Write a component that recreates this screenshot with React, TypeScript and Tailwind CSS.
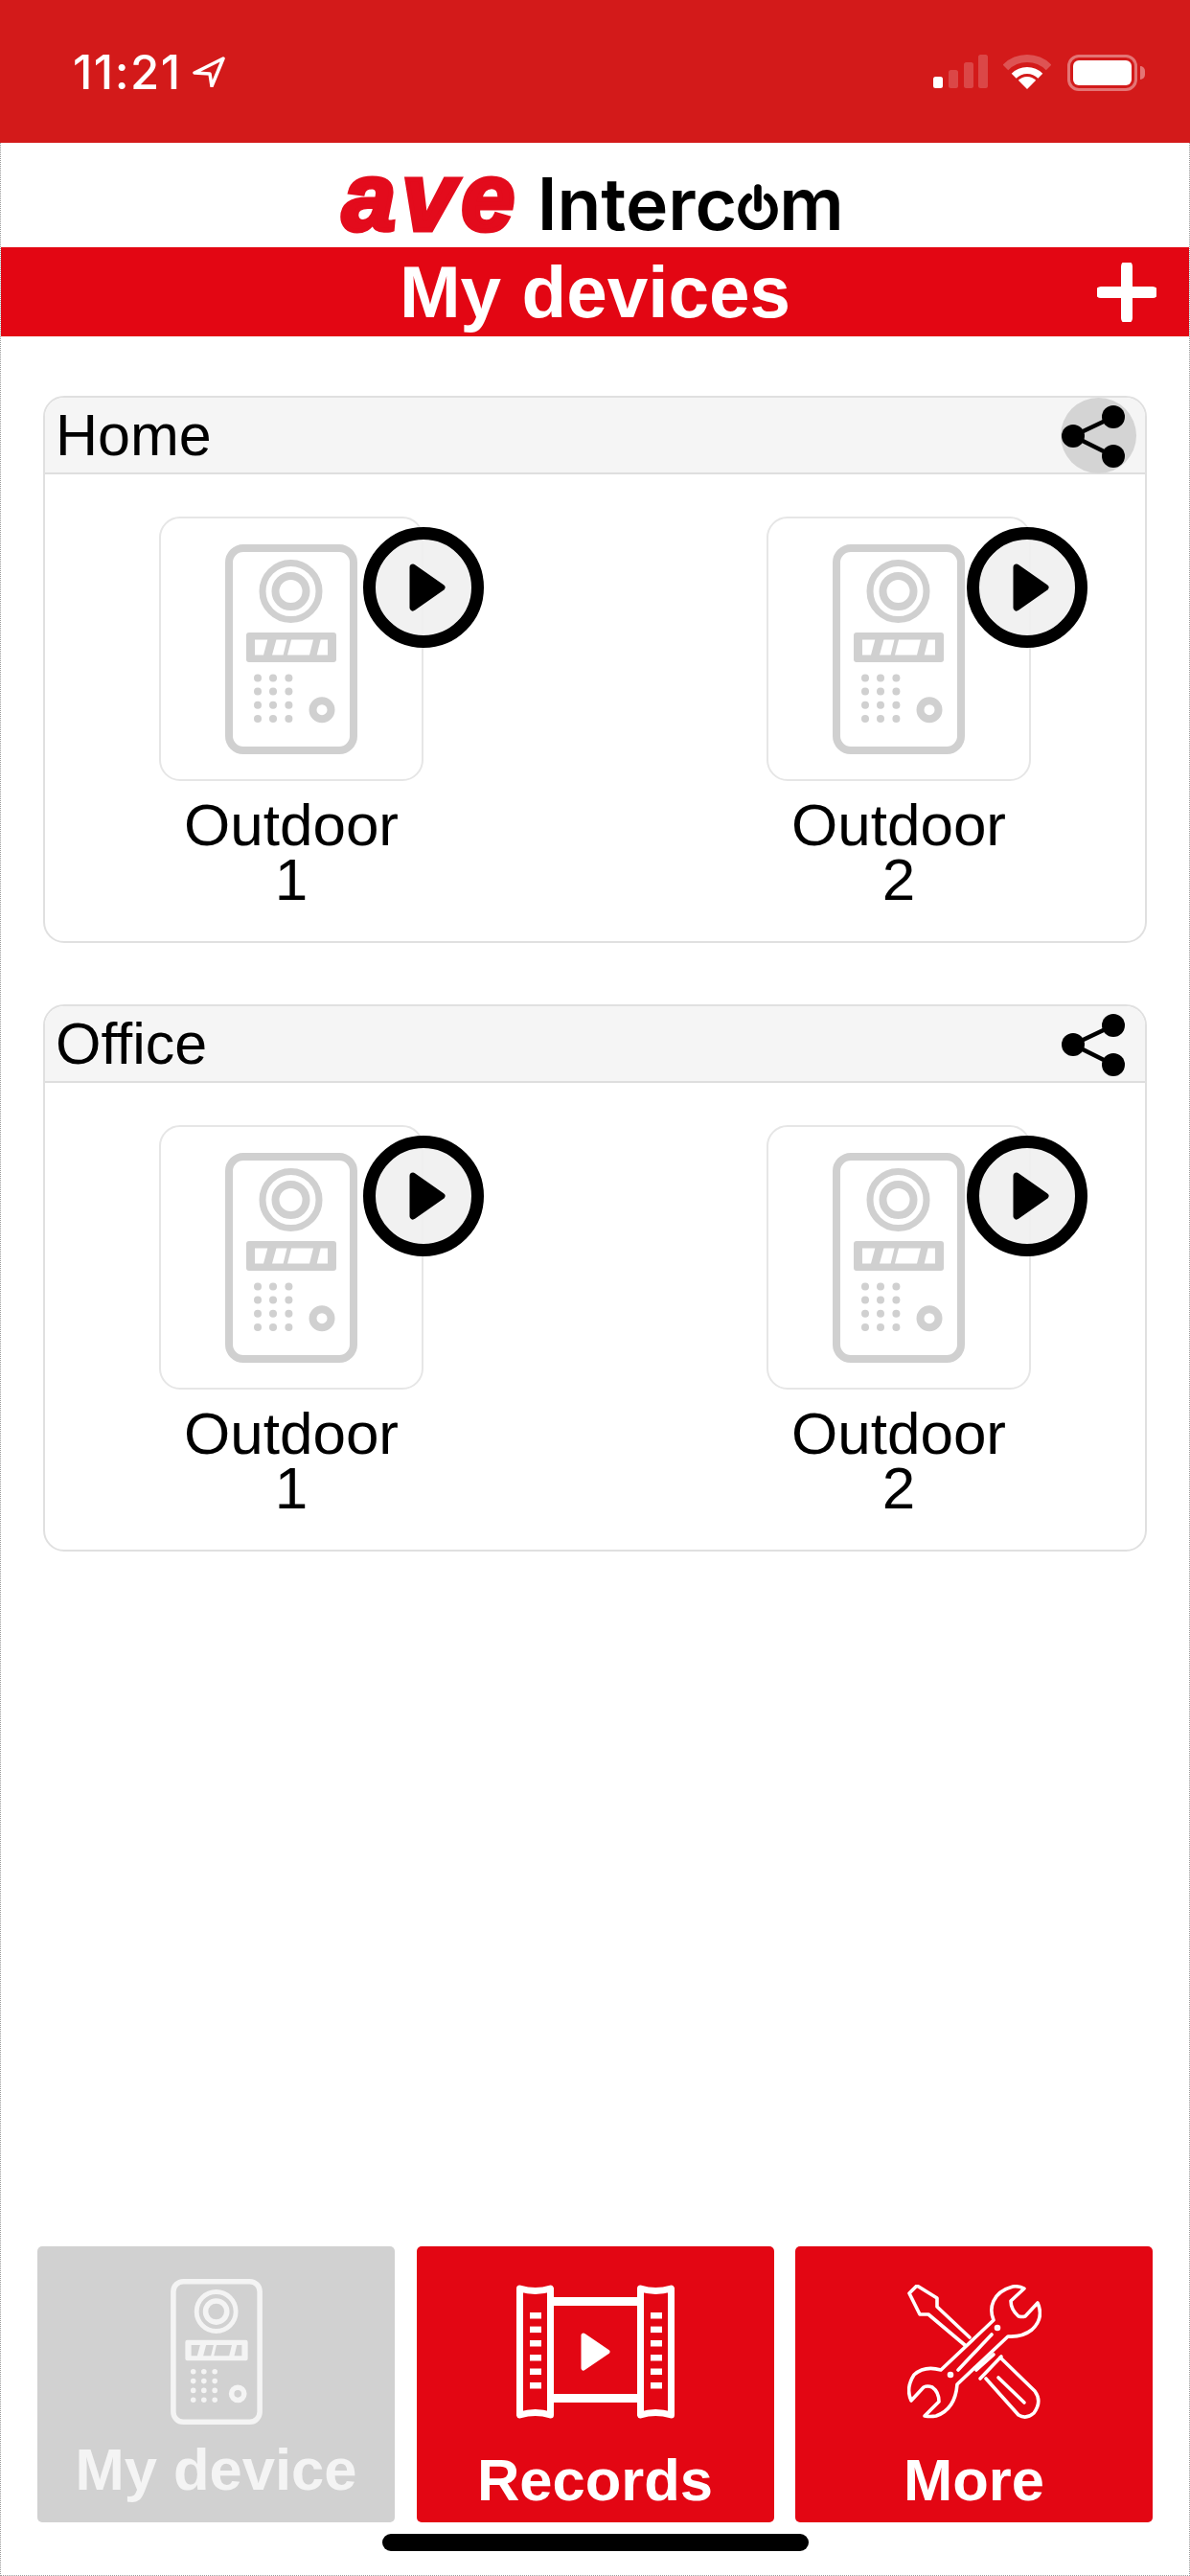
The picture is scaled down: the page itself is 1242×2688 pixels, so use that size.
const DOTS_X = [34, 50, 66.4];
const DOTS_Y = [139.5, 153.6, 167.7, 181.9];

function PanelIcon({ className }: { className: string }) {
  return (
    <svg viewBox="0 0 138 219" className={className} fill="none" stroke="currentColor">
      <rect x="4" y="4" width="130" height="211" rx="15" strokeWidth="8" />
      <circle cx="68.5" cy="49" r="29.5" strokeWidth="7" />
      <circle cx="68.5" cy="49" r="16" strokeWidth="8" />
      <path
        fill="currentColor"
        stroke="none"
        fillRule="evenodd"
        d="M25 92H113a3 3 0 0 1 3 3V120a3 3 0 0 1-3 3H25a3 3 0 0 1-3-3V95a3 3 0 0 1 3-3Z M31 99.5H44.3L40 115.5H31Z M53.4 99.5H64.5L60.6 115.5H49Z M69 99.5H92L88 115.5H65Z M99.6 99.5H107V115.5H95.7Z"
      />
      {DOTS_Y.map((y) =>
        DOTS_X.map((x) => <circle key={`${x}-${y}`} cx={x} cy={y} r="4" fill="currentColor" stroke="none" />),
      )}
      <circle cx="101" cy="172.7" r="9.5" strokeWidth="8" />
    </svg>
  );
}

function RecordsIcon() {
  const holes = [29, 43.6, 58, 73, 87.5, 102];
  return (
    <svg viewBox="0 0 165 140" className="h-[140px] w-[165px] text-white" fill="none" stroke="currentColor">
      <path d="M3.5 4Q20 9 35.5 4V136Q20 131 3.5 136Z" strokeWidth="7" strokeLinejoin="round" />
      <path d="M129.5 4Q145 9 161.5 4V136Q145 131 129.5 136Z" strokeWidth="7" strokeLinejoin="round" />
      <rect x="39" y="13" width="87" height="9" fill="currentColor" stroke="none" />
      <rect x="39" y="114" width="87" height="9" fill="currentColor" stroke="none" />
      {holes.map((y) => (
        <g key={y} fill="currentColor" stroke="none">
          <rect x="14" y={y} width="12" height="6.5" />
          <rect x="140" y={y} width="12" height="6.5" />
        </g>
      ))}
      <path d="M70 53L95 70L70 87Z" fill="currentColor" strokeWidth="5" strokeLinejoin="round" />
    </svg>
  );
}

function ToolsIcon() {
  return (
    <svg
      viewBox="0 0 140 140"
      className="h-[140px] w-[140px] text-white"
      fill="none"
      stroke="currentColor"
      strokeWidth="3.6"
      strokeLinecap="round"
      strokeLinejoin="round"
    >
      <path d="M35 89L90 37C85 25 88 8 110 2Q116 1 122 4L108 17Q108 26 116 33Q120 34 123 33L136 19Q143 35 130 47Q120 55 105 54L52 104Q50 130 30 137Q24 138 18 137L33 122Q33 112 26 107Q21 105 17 107L4 121Q-2 108 7 94Q18 84 35 89Z" />
      <path d="M53 89L88 52" />
      <circle cx="94" cy="45" r="1.5" />
      <circle cx="45" cy="94" r="1.5" />
      <path d="M65 55L31 23V14L10 1L2 9L13 31H22L60 63" />
      <path d="M97 76L133 111Q141 122 132 134Q124 141 116 136L82 98" />
      <path d="M72 89L90 73M76 98L98 75" />
      <path d="M95 97L122 123" />
    </svg>
  );
}

function Device({ num, playPos }: { num: string; playPos: string }) {
  return (
    <div className="flex w-[276px] flex-col items-center">
      <div className="relative flex h-[276px] w-[276px] items-center justify-center rounded-[22px] border-2 border-[#e6e6e6]">
        <PanelIcon className="h-[219px] w-[138px] text-[#d0d0d0]" />
        <div
          className={`absolute top-[9px] flex h-[126px] w-[126px] items-center justify-center rounded-full border-[13px] border-black bg-[#f0f0f0]/90 ${playPos}`}
        >
          <svg viewBox="0 0 38 50" className="ml-[8px] h-[50px] w-[38px]">
            <path d="M4 4L34 25L4 46Z" fill="#000" stroke="#000" strokeWidth="7" strokeLinejoin="round" />
          </svg>
        </div>
      </div>
      <div className="mt-[17px] w-[320px] text-center text-[62px] leading-[57px] text-black">
        <div>Outdoor</div>
        <div>{num}</div>
      </div>
    </div>
  );
}

function GroupCard({ name, active }: { name: string; active?: boolean }) {
  return (
    <section className="h-[571px] w-[1152px] rounded-[22px] border-2 border-[#e0e0e0]">
      <div className="flex h-[80px] items-center justify-between rounded-t-[20px] border-b-2 border-[#dedede] bg-[#f5f5f5] pl-[11px] pr-[9px]">
        <span className="text-[61px] leading-none text-black">{name}</span>
        <div className={`flex h-[79px] w-[79px] items-center justify-center rounded-full ${active ? "bg-[#d4d4d4]" : ""}`}>
          <svg viewBox="0 0 79 79" className="h-[79px] w-[79px]" fill="#000" stroke="#000">
            <path d="M55 20L13 40L55 61" fill="none" strokeWidth="4.5" />
            <circle cx="13" cy="40" r="12" stroke="none" />
            <circle cx="55" cy="20" r="12" stroke="none" />
            <circle cx="55" cy="61" r="12" stroke="none" />
          </svg>
        </div>
      </div>
      <div className="flex justify-between px-[119px] pt-[44px]">
        <Device num="1" playPos="right-[-65px]" />
        <Device num="2" playPos="right-[-61px]" />
      </div>
    </section>
  );
}

function NavButton({ label, bg, icon, labelClass }: { label: string; bg: string; icon: React.ReactNode; labelClass: string }) {
  return (
    <div className={`flex h-[288px] w-[373px] flex-col items-center rounded-[5px] ${bg}`}>
      {icon}
      <span className={`text-[61.5px] font-bold leading-none ${labelClass}`}>{label}</span>
    </div>
  );
}

export default function App() {
  return (
    <div className="flex h-[2688px] w-[1242px] flex-col overflow-hidden bg-white font-['Liberation_Sans',sans-serif]">
      <header className="flex h-[149px] shrink-0 items-start justify-between bg-[#d31a1a] pl-[76px] pr-[47px] pt-[57px]">
        <div className="flex items-start">
          <span className="font-['Inter',sans-serif] text-[49px] font-medium leading-[38px] tracking-[1.5px] text-white">11:21</span>
          <svg viewBox="0 0 34 32" className="ml-[11px] mt-[2px] h-[32px] w-[34px]" fill="none" stroke="#fff" strokeWidth="3.5" strokeLinejoin="round">
            <path d="M32 2L2 17L18 18L20 31Z" />
          </svg>
        </div>
        <div className="flex items-start">
          <svg viewBox="0 0 58 36" className="h-[36px] w-[58px]" fill="#fff">
            <rect x="1" y="23" width="10" height="12" rx="2.5" />
            <rect x="17" y="16" width="10" height="19" rx="2.5" opacity="0.2" />
            <rect x="33" y="8" width="10" height="27" rx="2.5" opacity="0.2" />
            <rect x="48" y="0" width="10" height="35" rx="2.5" opacity="0.2" />
          </svg>
          <svg viewBox="0 0 50 37" className="ml-[16px] h-[37px] w-[50px]" fill="none" stroke="#fff">
            <path d="M2.4 13.4A32 32 0 0 1 47.6 13.4" strokeWidth="8" opacity="0.25" />
            <path d="M11.2 22.2A19.5 19.5 0 0 1 38.8 22.2" strokeWidth="7" />
            <path d="M15.8 26.8A13 13 0 0 1 34.2 26.8L25 36Z" fill="#fff" stroke="none" />
          </svg>
          <div className="ml-[17px] flex items-center">
            <div className="h-[38px] w-[73px] rounded-[12px] border-[3px] border-white/40 p-[3px]">
              <div className="h-full w-full rounded-[6px] bg-white" />
            </div>
            <div className="ml-[3px] h-[14px] w-[5px] rounded-r-full bg-white/40" />
          </div>
        </div>
      </header>

      <div className="flex min-h-0 flex-1 flex-col border-x border-b border-dotted border-[#9a9a9a]">
        <div className="flex h-[109px] shrink-0 items-baseline justify-center pr-[4px] pt-[6px]">
          <span className="text-[100px] font-bold italic leading-none tracking-[6.5px] text-[#e30b1c] [-webkit-text-stroke:5px_#e30b1c]">ave</span>
          <div className="ml-[17px] flex items-baseline font-['Inter',sans-serif] text-[75px] font-semibold leading-none text-black">
            <span>Interc</span>
            <svg viewBox="0 0 44 48" className="h-[48px] w-[44px]" fill="none" stroke="#000" strokeWidth="7.5" strokeLinecap="round">
              <path d="M12.25 13.6A17 17 0 1 0 31.75 13.6" />
              <path d="M22 4V25" />
            </svg>
            <span>m</span>
          </div>
        </div>

        <div className="relative flex h-[93px] shrink-0 items-center justify-center bg-[#e30613] pt-[2px]">
          <h1 className="text-[76.5px] font-bold leading-none text-white">My devices</h1>
          <svg viewBox="0 0 62 62" className="absolute right-[34px] top-[16px] h-[62px] w-[62px]" stroke="#fff" strokeLinecap="round">
            <path d="M31 4V58" strokeWidth="12" />
            <path d="M4 31H58" strokeWidth="12" />
          </svg>
        </div>

        <main className="flex flex-1 flex-col gap-[64px] px-[44px] pt-[62px]">
          <GroupCard name="Home" active />
          <GroupCard name="Office" />
        </main>

        <nav className="flex shrink-0 justify-between px-[38px]">
          <NavButton
            label="My device"
            bg="bg-[#d1d1d1]"
            labelClass="mt-[16px] text-[#f4f4f4]"
            icon={<PanelIcon className="mt-[34px] h-[152px] w-[96px] text-[#f4f4f4]" />}
          />
          <NavButton
            label="Records"
            bg="bg-[#e30613]"
            labelClass="mt-[33px] text-white"
            icon={<div className="mt-[40px] h-[140px]"><RecordsIcon /></div>}
          />
          <NavButton
            label="More"
            bg="bg-[#e30613]"
            labelClass="mt-[33px] text-white"
            icon={<div className="mt-[40px] h-[140px]"><ToolsIcon /></div>}
          />
        </nav>

        <div className="flex h-[55px] shrink-0 justify-center pt-[12px]">
          <div className="h-[18px] w-[445px] rounded-full bg-black" />
        </div>
      </div>
    </div>
  );
}
